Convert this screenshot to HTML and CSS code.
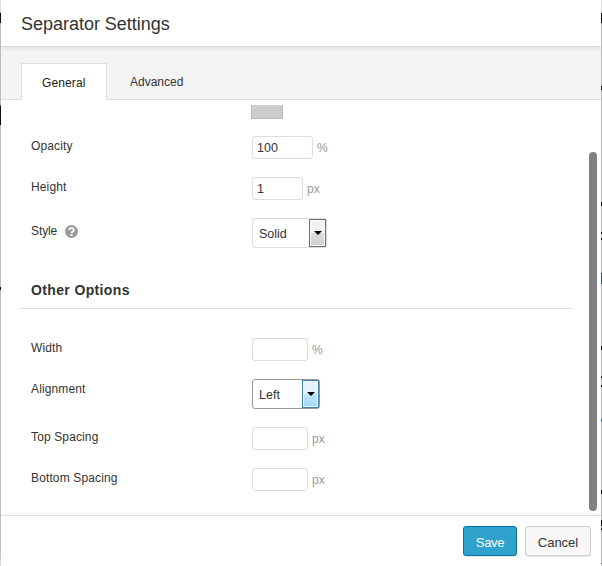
FILE: index.html
```html
<!DOCTYPE html>
<html lang="en">
<head>
<meta charset="utf-8">
<title>Separator Settings</title>
<link rel="stylesheet" href="styles.css">
</head>
<body>
<div class="lightbox">
  <div class="edge edge-left"></div>
  <main class="panel">
    <header class="header"><h1><span>Separator Settings</span></h1></header>
    <nav class="tabs">
      <a class="tab active"><span>General</span></a>
      <a class="tab"><span>Advanced</span></a>
    </nav>
    <section class="fields">
      <div class="swatch"></div>
      <div class="row"><label>Opacity</label><div class="input w61">100</div><span class="unit">%</span></div>
      <div class="row"><label>Height</label><div class="input w51">1</div><span class="unit">px</span></div>
      <div class="row select-row"><label class="low"><span class="tight">Style</span>
        <svg class="help" width="13" height="13" viewBox="0 0 13 13"><circle cx="6.5" cy="6.5" r="6.5" fill="#999"/><path d="M4.2 5.1C4.3 2.6 8.9 2.5 8.9 5 8.9 6.5 6.6 6.4 6.6 8" fill="none" stroke="#fff" stroke-width="1.8"/><path d="M5.6 9h2v1.8h-2z" fill="#fff"/></svg></label>
        <div class="select w75"><span>Solid</span><i class="arrow"></i></div></div>
      <h2><span>Other Options</span></h2>
      <div class="row"><label>Width</label><div class="input w56"></div><span class="unit">%</span></div>
      <div class="row select-row"><label>Alignment</label><div class="select w68 focused"><span>Left</span><i class="arrow"></i></div></div>
      <div class="row"><label>Top Spacing</label><div class="input w56"></div><span class="unit">px</span></div>
      <div class="row"><label>Bottom Spacing</label><div class="input w56"></div><span class="unit">px</span></div>
      <div class="scrollbar"></div>
    </section>
    <footer class="footer"><button class="save">Save</button><button>Cancel</button></footer>
  </main>
  <div class="edge edge-right"></div>
</div>
</body>
</html>
```

FILE: styles.css
```css
* { box-sizing: border-box; }
body { margin: 0; background: #fff; color: #333; font: 12px/16px "Liberation Sans", Arial, sans-serif; overflow: hidden; }
.lightbox { display: grid; grid-template-columns: 1px 600px 1px; height: 566px; }
.panel { display: flex; flex-direction: column; background: #fff; }
.edge-left { background: linear-gradient(#ddd 0 12px, #999 12px 13px, #111 13px 23px, #bbb 23px 105px, #468 105px 106px, #111 106px 125px, #bbb 125px 287px, #111 287px 290px, #bbb 290px 550px, #ddd); }
.edge-right { background: linear-gradient(#ddd 0 13px, #111 13px 23px, #bbb 23px 86px, #111 86px 90px, #bbb 90px 202px, #111 202px 206px, #bbb 206px 232px, #111 232px 234px, #bbb 234px 238px, #111 238px 240px, #bbb 240px 273px, #0e5b91 273px 284px, #bbb 284px 346px, #111 346px 350px, #bbb 350px 376px, #111 376px 378px, #bbb 378px 385px, #111 385px 387px, #bbb 387px 419px, #1777b0 419px 422px, #bbb 422px 490px, #111 490px 494px, #bbb 494px 520px, #111 520px 526px, #bbb 526px 528px, #111 528px 530px, #bbb 530px 563px, #468 563px 564px, #ddd 564px); }
.header { position: relative; height: 47px; border-bottom: 1px solid #ddd; box-shadow: 0 1px 5px rgba(0,0,0,.1); padding: 13px 20px; clip-path: inset(0 0 -8px 0); }
h1 { margin: 0; font-size: 18px; font-weight: 400; line-height: 22px; letter-spacing: -.02px; }
.tabs { display: flex; align-items: flex-end; height: 53px; padding-left: 20px; background: #f4f4f4; border-bottom: 1px solid #ddd; }
.tab { height: 37px; padding: 12px 23px 0; line-height: 16px; }
.tab.active { width: 86px; height: 37px; margin-bottom: -1px; padding: 11px 0 0 20px; background: #fff; border: 1px solid #ddd; border-bottom: 0; color: #222; letter-spacing: .12px; }
.fields { position: relative; height: 415px; padding: 5px 30px 0; }
.swatch { width: 32px; height: 14px; margin: 0 0 17px 220px; background: #ccc; border: 1px solid #b8b8b8; border-top: 0; }
.row { display: flex; height: 23px; margin-bottom: 18px; }
.select-row { height: 30px; }
label { width: 221px; padding-top: 2px; display: flex; line-height: 16px; letter-spacing: .13px; }
label.low { padding-top: 5px; }
.tight { letter-spacing: -.1px; }
.help { margin: 2px 0 0 8px; }
.input { height: 23px; border: 1px solid #ddd; border-radius: 3px; padding: 4px 3px 0 4px; font-size: 12.5px; line-height: 15px; }
.unit { margin: 4px 0 0 4px; color: #999; line-height: 16px; letter-spacing: .1px; }
.w51 { width: 51px; }
.w56 { width: 56px; }
.w61 { width: 61px; }
.w68 { width: 68px; }
.w75 { width: 75px; }
.select { display: flex; justify-content: space-between; height: 30px; border: 1px solid #ddd; border-radius: 3px; padding-left: 6px; font-size: 12.5px; line-height: 30px; }
.arrow { display: flex; align-items: center; justify-content: center; width: 17px; height: 28px; border: 1px solid #707070; box-shadow: inset 0 0 0 1px #fafafa; background: linear-gradient(#f2f2f2 0 50%, #ddd 50%, #cfcfcf); }
.arrow::before { content: ""; border: 4px solid transparent; border-top-color: #000; border-bottom: 0; }
.focused { border-color: #999; }
.focused .arrow { border-color: #3c7fb1; box-shadow: inset 0 0 0 1px #f3fbff; background: linear-gradient(#e5f4fc 0 50%, #c4e5f6 50%, #a2d7f5); }
h2 { width: 550px; height: 43px; margin: 0 0 29px -10px; padding: 14px 10px 0; border-bottom: 1px solid #ddd; font-size: 14px; line-height: 20px; letter-spacing: .36px; }
.scrollbar { position: absolute; top: 52px; right: 4px; width: 8px; height: 359px; border-radius: 4px; background: #808080; }
.footer { display: flex; justify-content: flex-end; gap: 8px; height: 51px; border-top: 1px solid #ddd; padding: 10px 10px 0; box-shadow: 0 -1px 4px rgba(0,0,0,.06); clip-path: inset(-8px 0 0 0); }
button { width: 66px; height: 30px; padding: 2px 0 0; border: 1px solid #ccc; border-radius: 3px; background: #f7f7f7; color: #333; font: 13px "Liberation Sans", Arial, sans-serif; box-shadow: 0 1px 0 rgba(0,0,0,.08); }
.save { width: 54px; background: #2ea2cc; border-color: #0074a2; color: #fff; letter-spacing: -.3px; }
```
